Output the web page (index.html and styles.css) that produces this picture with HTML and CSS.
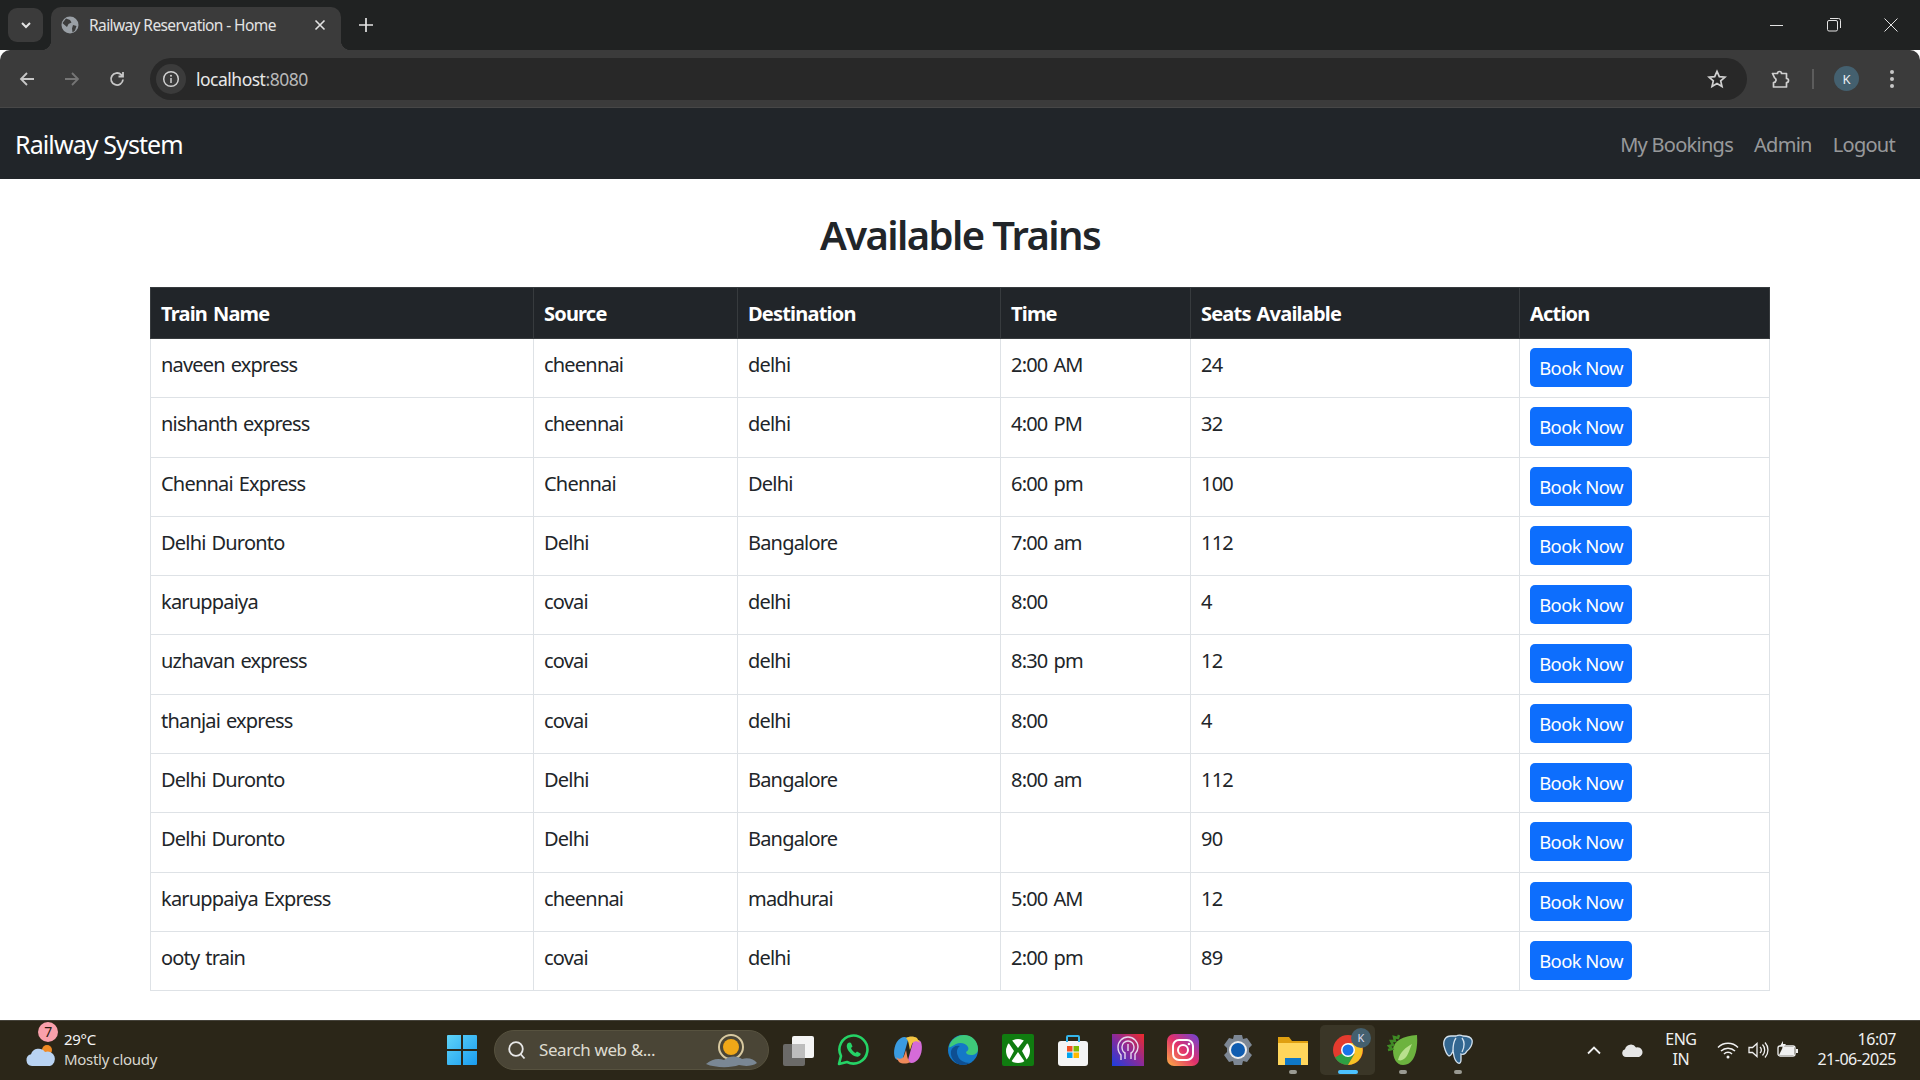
FILE: index.html
```html
<!DOCTYPE html>
<html lang="en">
  <head>
    <meta charset="UTF-8" />
    <title>Railway Reservation - Home</title>
    <link rel="stylesheet" href="styles.css">
  </head>
  <body>
    <div class="tabstrip">
      <div class="tab-search"><svg width="14" height="14" viewBox="0 0 14 14"><path d="M3 5l4 4 4-4" fill="none" stroke="#e3e3e3" stroke-width="2"/></svg></div>
      <div class="tab">
        <svg width="18" height="18" viewBox="0 0 18 18"><circle cx="9" cy="9" r="8.5" fill="#9aa0a6"/><path d="M5 2.5l4 1.5 1.5 2.5-3 1.5-1.5 3L3 8.5 1.5 7zM12 9l3.5 1-1.5 4.5-2.5 2-.5-4z" fill="#3c3c3c"/></svg>
        <span class="tab-title">Railway Reservation - Home</span>
        <svg class="tab-close" width="12" height="12" viewBox="0 0 12 12"><path d="M1.5 1.5l9 9M10.5 1.5l-9 9" stroke="#e3e3e3" stroke-width="1.6"/></svg>
      </div>
      <svg class="new-tab" width="14" height="14" viewBox="0 0 14 14"><path d="M7 0v14M0 7h14" stroke="#e3e3e3" stroke-width="1.7"/></svg>
      <div class="win-controls">
        <svg width="14" height="14" viewBox="0 0 14 14"><path d="M0 7.5h13" stroke="#e3e3e3"/></svg>
        <svg width="14" height="14" viewBox="0 0 14 14"><rect x=".5" y="2.5" width="10" height="10.5" rx="1.5" fill="none" stroke="#e3e3e3"/><path d="M3 .5h8.5a2 2 0 0 1 2 2V10" fill="none" stroke="#e3e3e3"/></svg>
        <svg width="14" height="14" viewBox="0 0 14 14"><path d="M.5.5l13 13M13.5.5l-13 13" stroke="#e3e3e3"/></svg>
      </div>
    </div>

    <div class="toolbar">
      <svg class="tool" width="18" height="18" viewBox="0 0 18 18"><path d="M16 9H3M9 3L3 9l6 6" fill="none" stroke="#c7c7c7" stroke-width="1.8"/></svg>
      <svg class="tool" width="18" height="18" viewBox="0 0 18 18"><path d="M2 9h13M9 3l6 6-6 6" fill="none" stroke="#757575" stroke-width="1.8"/></svg>
      <svg class="tool" width="18" height="18" viewBox="0 0 18 18"><path d="M15 9.5a6 6 0 1 1-1.8-4.8L15 6.500M15 2v4.500h-4.500" fill="none" stroke="#c7c7c7" stroke-width="1.8"/></svg>
      <div class="urlbar">
        <div class="site-info"><svg width="18" height="18" viewBox="0 0 18 18"><circle cx="9" cy="9" r="7.300" fill="none" stroke="#d0d0d0" stroke-width="1.500"/><path d="M9 8v5" stroke="#d0d0d0" stroke-width="1.500"/><circle cx="9" cy="5.700" r="1" fill="#d0d0d0"/></svg></div>
        <span class="url">localhost<span class="url-port">:8080</span></span>
        <svg class="star" width="20" height="20" viewBox="0 0 20 20"><path d="M10 2.300l2.300 5.300 5.700.5-4.300 3.800 1.300 5.600-5-3-5 3 1.300-5.600L2 8.100l5.700-.5z" fill="none" stroke="#d0d0d0" stroke-width="1.700"/></svg>
      </div>
      <svg class="ext" width="20" height="20" viewBox="0 0 20 20"><path d="M1.500 4.500h5a2 2 0 0 1 4 0h5v5a2 2 0 0 1 0 4V18H2.500v-4.500a2.500 2.500 0 0 0 1-4.800z" fill="none" stroke="#d0d0d0" stroke-width="1.700" stroke-linejoin="round"/></svg>
      <span class="divider"></span>
      <span class="avatar">K</span>
      <svg class="dots" width="6" height="20" viewBox="0 0 6 20"><circle cx="3" cy="3" r="2" fill="#c7c7c7"/><circle cx="3" cy="10" r="2" fill="#c7c7c7"/><circle cx="3" cy="17" r="2" fill="#c7c7c7"/></svg>
    </div>

    <nav class="navbar">
      <a class="brand">Railway System</a>
      <div class="nav-links">
        <a>My Bookings</a>
        <a>Admin</a>
        <a>Logout</a>
      </div>
    </nav>

    <main class="content">
      <h2 class="page-title">Available Trains</h2>
      <table class="trains">
        <colgroup>
          <col class="c-name"><col class="c-source"><col class="c-dest"><col class="c-time"><col class="c-seats"><col class="c-action">
        </colgroup>
        <thead>
          <tr><th>Train Name</th><th>Source</th><th>Destination</th><th>Time</th><th>Seats Available</th><th>Action</th></tr>
        </thead>
        <tbody>
          <tr><td>naveen express</td><td>cheennai</td><td>delhi</td><td>2:00 AM</td><td>24</td><td><button type="button" class="btn">Book Now</button></td></tr>
          <tr><td>nishanth express</td><td>cheennai</td><td>delhi</td><td>4:00 PM</td><td>32</td><td><button type="button" class="btn">Book Now</button></td></tr>
          <tr><td>Chennai Express</td><td>Chennai</td><td>Delhi</td><td>6:00 pm</td><td>100</td><td><button type="button" class="btn">Book Now</button></td></tr>
          <tr><td>Delhi Duronto</td><td>Delhi</td><td>Bangalore</td><td>7:00 am</td><td>112</td><td><button type="button" class="btn">Book Now</button></td></tr>
          <tr><td>karuppaiya</td><td>covai</td><td>delhi</td><td>8:00</td><td>4</td><td><button type="button" class="btn">Book Now</button></td></tr>
          <tr><td>uzhavan express</td><td>covai</td><td>delhi</td><td>8:30 pm</td><td>12</td><td><button type="button" class="btn">Book Now</button></td></tr>
          <tr><td>thanjai express</td><td>covai</td><td>delhi</td><td>8:00</td><td>4</td><td><button type="button" class="btn">Book Now</button></td></tr>
          <tr><td>Delhi Duronto</td><td>Delhi</td><td>Bangalore</td><td>8:00 am</td><td>112</td><td><button type="button" class="btn">Book Now</button></td></tr>
          <tr><td>Delhi Duronto</td><td>Delhi</td><td>Bangalore</td><td></td><td>90</td><td><button type="button" class="btn">Book Now</button></td></tr>
          <tr><td>karuppaiya Express</td><td>cheennai</td><td>madhurai</td><td>5:00 AM</td><td>12</td><td><button type="button" class="btn">Book Now</button></td></tr>
          <tr><td>ooty train</td><td>covai</td><td>delhi</td><td>2:00 pm</td><td>89</td><td><button type="button" class="btn">Book Now</button></td></tr>
        </tbody>
      </table>
    </main>

    <footer class="taskbar">
      <div class="weather">
        <span class="weather-icon">
          <svg width="32" height="24" viewBox="0 0 32 24"><circle cx="22" cy="6" r="5" fill="#f08a24"/><path d="M7 22a6 6 0 0 1-1-11.800A8 8 0 0 1 20 8a6.500 6.500 0 0 1 5 14z" fill="#b9d3f2"/></svg>
          <span class="badge">7</span>
        </span>
        <div class="weather-text"><div class="temp">29°C</div><div>Mostly cloudy</div></div>
      </div>
      <svg class="start" width="30" height="30" viewBox="0 0 30 30"><defs><linearGradient id="win" x1="0" y1="0" x2="1" y2="1"><stop offset="0" stop-color="#5fd4f8"/><stop offset="1" stop-color="#1a9cf0"/></linearGradient></defs><path d="M0 1a1 1 0 0 1 1-1h13v14H0zM16 0h13a1 1 0 0 1 1 1v13H16zM0 16h14v14H1a1 1 0 0 1-1-1zM16 16h14v13a1 1 0 0 1-1 1H16z" fill="url(#win)"/></svg>
      <div class="search">
        <svg width="20" height="20" viewBox="0 0 20 20"><circle cx="9" cy="9" r="6.800" fill="none" stroke="#e8e8e8" stroke-width="1.800"/><path d="M13.500 14l4 4.500" stroke="#e8e8e8" stroke-width="1.800"/></svg>
        <span class="search-text">Search web &amp;...</span>
        <svg class="search-art" width="56" height="40" viewBox="0 0 56 40"><circle cx="27" cy="17" r="12" fill="none" stroke="#d8c9a0" stroke-width="2"/><circle cx="27" cy="17" r="8" fill="#f0a818"/><path d="M2 34c6-5 12-6 18-4 6-5 14-4 18-1 6-2 12 0 15 4-6 4-14 3-18 2-8 3-24 3-33-1z" fill="#7a8794"/></svg>
      </div>
      <div class="apps">
        <div class="app"><svg width="32" height="32" viewBox="0 0 32 32"><rect x="10" y="2" width="22" height="22" rx="2" fill="#f4f4f4"/><rect x="1" y="10" width="22" height="22" rx="2" fill="#777" fill-opacity=".85"/><rect x="10" y="10" width="13" height="14" fill="#bdbdbd"/></svg></div>
        <div class="app"><svg width="32" height="32" viewBox="0 0 32 32"><path d="M2 30l2-8A14 14 0 1 1 10 28z" fill="none" stroke="#25d366" stroke-width="2.600" stroke-linejoin="round"/><path d="M11 9c-2 2-1.500 5 1 8.500s6.500 6 9.500 5c2-.7 2.500-2.500 2-3l-3.500-2-1.500 1.500c-1.500-.5-4-3-4.500-5l1.500-1.500-1.500-3.500c-.5-.7-2-.7-3 0z" fill="#25d366"/></svg></div>
        <div class="app"><svg width="32" height="32" viewBox="0 0 32 32"><path d="M9 4c3-2 7-1 7 2l-5 18c-1 3-6 3-8 0-2-5-1-16 6-20z" fill="#3a9be0"/><path d="M23 28c-3 2-7 1-7-2l5-18c1-3 6-3 8 0 2 5 1 16-6 20z" fill="#d56bd8"/><path d="M14 4c3-2 8-2 11 0l3 5c-3-3-7-2-8 1l-2 6c-1-4-1-9-4-12z" fill="#f4c542"/><path d="M18 28c-3 2-8 2-11 0l-3-5c3 3 7 2 8-1l2-6c1 4 1 9 4 12z" fill="#f08a5a"/></svg></div>
        <div class="app"><svg width="32" height="32" viewBox="0 0 32 32"><circle cx="16" cy="16" r="15" fill="#1478c8"/><path d="M2 13C4 4 12 1 17 1c8 0 14 6 14 14 0 4-3 6-7 6-3 0-5-1-5-3 2-1 3-3 2-5-2-4-8-5-12-3S3 14 2 13z" fill="#3ec97a"/><path d="M15 31C8 30 3 24 4 17c1-4 5-6 9-5-3 2-4 6-2 10 1 4 6 7 12 7-2 1-5 2-8 2z" fill="#0e4f92"/></svg></div>
        <div class="app"><svg width="32" height="32" viewBox="0 0 32 32"><rect width="32" height="32" rx="2" fill="#107c10"/><circle cx="16" cy="17" r="12" fill="#fff"/><path d="M16 14L9 5l-3 3 6 9-6 11h3zM16 14l7-9 3 3-6 9 6 11h-3l-7-10-7 10" fill="#107c10"/></svg></div>
        <div class="app"><svg width="32" height="32" viewBox="0 0 32 32"><rect x="1" y="7" width="30" height="25" rx="3" fill="#f4f4f4"/><path d="M10 8V3a1 1 0 0 1 1-1h10a1 1 0 0 1 1 1v5" fill="none" stroke="#35b5ea" stroke-width="2"/><rect x="10" y="12" width="5.500" height="5.500" fill="#f25022"/><rect x="16.500" y="12" width="5.500" height="5.500" fill="#7fba00"/><rect x="10" y="18.500" width="5.500" height="5.500" fill="#00a4ef"/><rect x="16.500" y="18.500" width="5.500" height="5.500" fill="#ffb900"/></svg></div>
        <div class="app"><svg width="32" height="32" viewBox="0 0 32 32"><defs><linearGradient id="pc" x1="0" y1="1" x2="1" y2="0"><stop offset="0" stop-color="#1a3fe0"/><stop offset=".5" stop-color="#8a2a9a"/><stop offset="1" stop-color="#ef2a2a"/></linearGradient></defs><rect width="32" height="32" fill="url(#pc)"/><path d="M9 26v-5c-2-2-3-4-3-8a10 10 0 0 1 20 0c0 3-1 5-3 7v6M13 25v-6c-2-1-3-3-3-6a6 6 0 0 1 12 0c0 3-1 5-3 6v6M16 10v7" fill="none" stroke="#e6d8ee" stroke-width="1.400"/></svg></div>
        <div class="app"><svg width="32" height="32" viewBox="0 0 32 32"><defs><linearGradient id="ig" x1="0" y1="1" x2="1" y2="0"><stop offset="0" stop-color="#fdb043"/><stop offset=".5" stop-color="#e1306c"/><stop offset="1" stop-color="#6a44d8"/></linearGradient></defs><rect width="32" height="32" rx="7" fill="url(#ig)"/><rect x="6" y="6" width="20" height="20" rx="6" fill="none" stroke="#fff" stroke-width="2"/><circle cx="16" cy="16" r="5" fill="none" stroke="#fff" stroke-width="2"/><circle cx="22" cy="10" r="1.300" fill="#fff"/></svg></div>
        <div class="app"><svg width="32" height="32" viewBox="0 0 32 32"><path d="M12 1h8l1 4 4-1 5 7-3 3v4l3 3-5 7-4-1-1 4h-8l-1-4-4 1-5-7 3-3v-4L2 11l5-7 4 1z" fill="#7d8794"/><circle cx="16" cy="16" r="9" fill="#eee"/><circle cx="16" cy="16" r="7" fill="#0f5cb0"/></svg></div>
        <div class="app"><svg width="32" height="32" viewBox="0 0 32 32"><path d="M1 3h11l3 4h16v24H1z" fill="#e0a010"/><rect x="1" y="9" width="30" height="22" fill="#ffd65c"/><rect x="8" y="24" width="16" height="7" fill="#0f78c8"/></svg></div>
        <div class="app app-active"><svg width="32" height="32" viewBox="0 0 32 32"><circle cx="16" cy="16" r="15" fill="#e33b2e"/><path d="M16 16L3 23.500A15 15 0 0 0 16 31l6.500-11z" fill="#2ea043"/><path d="M16 9h13a15 15 0 0 1-13 22l6.500-11z" fill="#f7c325"/><circle cx="16" cy="16" r="7" fill="#fff"/><circle cx="16" cy="16" r="5.500" fill="#1a73e8"/></svg><span class="app-avatar">K</span></div>
        <div class="app"><svg width="32" height="32" viewBox="0 0 32 32"><path d="M6 16C6 7 16 2 30 1c1 14-2 30-14 30C9 31 6 24 6 16z" fill="#6db33f"/><path d="M1 16l4-1-3-3 4-1-2-4 4 0-1-4 4 1 1-3" fill="none" stroke="#3f8a24" stroke-width="2.500"/><path d="M11 26c2-8 8-13 14-16-3 6-4 14-10 16-2 1-3 0-4 0z" fill="#b8e08e"/></svg></div>
        <div class="app"><svg width="32" height="32" viewBox="0 0 32 32"><path d="M9 2c-6 0-8 5-7 10 1 4 3 9 5 10 2 0 3-3 4-5 1 2 0 9 5 12 2 1 3-1 3-3v-6c3 1 5-1 6-3 3-2 6-7 5-11-1-3-5-4-9-4-2-1-5-1-7 0C12 2 10 2 9 2z" fill="#336791" stroke="#d4e2ee" stroke-width="1.300"/><path d="M14 4c-3 4-3 9-3 13M20 4c3 4 2 10 0 14" fill="none" stroke="#d4e2ee" stroke-width="1.300"/></svg></div>
      </div>
      <div class="tray">
        <svg width="16" height="10" viewBox="0 0 16 10"><path d="M2 8.500l6-6 6 6" fill="none" stroke="#f0f0f0" stroke-width="1.800"/></svg>
        <svg class="tray-cloud" width="22" height="14" viewBox="0 0 22 14"><path d="M5 14a4 4 0 0 1-1-7.800A6 6 0 0 1 15 4.500 4.800 4.800 0 0 1 18 14z" fill="#e6e6e6"/></svg>
        <div class="lang"><div>ENG</div><div>IN</div></div>
        <svg class="tray-wifi" width="22" height="18" viewBox="0 0 22 18"><path d="M1 6.500a14 14 0 0 1 20 0M4 10a10 10 0 0 1 14 0M7 13a5.500 5.500 0 0 1 8 0" fill="none" stroke="#f0f0f0" stroke-width="1.500"/><circle cx="11" cy="16" r="1.500" fill="#f0f0f0"/></svg>
        <svg class="tray-sound" width="22" height="18" viewBox="0 0 22 18"><path d="M1 6.500h3.500L9 2.500v13l-4.500-4H1z" fill="none" stroke="#f0f0f0" stroke-width="1.300"/><path d="M12 6a4 4 0 0 1 0 6M14.500 3.500a8 8 0 0 1 0 11M17 1.500a11 11 0 0 1 0 15" fill="none" stroke="#f0f0f0" stroke-width="1.300"/></svg>
        <svg class="tray-battery" width="22" height="18" viewBox="0 0 22 18"><rect x="1" y="5" width="17" height="10" rx="2" fill="none" stroke="#f0f0f0" stroke-width="1.300"/><path d="M2 14l4-8h11v8z" fill="#f0f0f0"/><rect x="19" y="8" width="2" height="4" fill="#f0f0f0"/><path d="M6 0L3 5h3l-1 3 4-5H6z" fill="#f0f0f0"/></svg>
        <div class="clock"><div>16:07</div><div>21-06-2025</div></div>
      </div>
    </footer>
  </body>
</html>
```

FILE: styles.css
```css
* {
  box-sizing: border-box;
}

html,
body {
  height: 100%;
}

body {
  margin: 0;
  display: flex;
  flex-direction: column;
  overflow: hidden;
  background: #fff;
  color: #212529;
  font-family: "Noto Sans", "Open Sans", sans-serif;
}

svg {
  display: block;
  flex: none;
}

/* browser tab strip */
.tabstrip {
  height: 50px;
  flex: none;
  display: flex;
  align-items: flex-end;
  background: #202222;
  padding-left: 8px;
  color: #e3e3e3;
}

.tab-search {
  width: 35px;
  height: 34px;
  margin-bottom: 8px;
  border-radius: 9px;
  background: #3b3b3b;
  display: flex;
  align-items: center;
  justify-content: center;
}

.tab {
  position: relative;
  width: 290px;
  height: 43px;
  margin-left: 8px;
  padding: 0 15px 8px 10px;
  display: flex;
  align-items: center;
  background: #3b3b3b;
  border-radius: 10px 10px 0 0;
}

.tab::before,
.tab::after {
  content: "";
  position: absolute;
  bottom: 0;
  width: 10px;
  height: 10px;
}

.tab::before {
  left: -10px;
  background: radial-gradient(circle at 0 0, transparent 10px, #3b3b3b 10.5px);
}

.tab::after {
  right: -10px;
  background: radial-gradient(circle at 100% 0, transparent 10px, #3b3b3b 10.5px);
}

.tab-title {
  margin-left: 10px;
  font-size: 15.5px;
  letter-spacing: -0.6px;
  white-space: nowrap;
}

.tab-close {
  margin-left: auto;
}

.new-tab {
  margin: 0 0 18px 18px;
}

.win-controls {
  margin-left: auto;
  width: 150px;
  height: 50px;
  padding-right: 22px;
  display: flex;
  align-items: center;
  justify-content: space-between;
}

/* browser toolbar */
.toolbar {
  height: 58px;
  flex: none;
  display: flex;
  align-items: center;
  background: #3b3b3b;
  border-radius: 10px 10px 0 0;
  border-bottom: 1px solid #474747;
  padding-left: 18px;
  position: relative;
}

.tool {
  margin-right: 27px;
}

.urlbar {
  width: 1597px;
  height: 42px;
  margin-left: -3px;
  padding: 0 20px 0 6px;
  display: flex;
  align-items: center;
  background: #282828;
  border-radius: 21px;
}

.site-info {
  width: 30px;
  height: 30px;
  border-radius: 50%;
  background: #3b3b3b;
  display: flex;
  align-items: center;
  justify-content: center;
}

.url {
  margin-left: 10px;
  font-size: 17.5px;
  letter-spacing: -0.5px;
  color: #e8e8e8;
}

.url-port {
  color: #b8b8b8;
}

.star {
  margin-left: auto;
}

.ext {
  margin-left: 24px;
}

.divider {
  width: 2px;
  height: 20px;
  margin-left: 21px;
  background: #5c5c5c;
}

.avatar {
  width: 25px;
  height: 25px;
  margin-left: 20px;
  border-radius: 50%;
  background: #44606f;
  color: #e8eef2;
  font-size: 13px;
  display: flex;
  align-items: center;
  justify-content: center;
}

.dots {
  margin-left: 30px;
}

/* site navbar */
.navbar {
  height: 71px;
  flex: none;
  padding: 0 25px 0 15px;
  display: flex;
  align-items: center;
  justify-content: space-between;
  background: #212529;
}

.brand {
  color: #fff;
  font-size: 25px;
  letter-spacing: -0.9px;
}

.nav-links {
  display: flex;
  gap: 21px;
  padding-top: 2px;
  font-size: 20px;
  letter-spacing: -0.72px;
  color: rgba(255, 255, 255, 0.55);
}

/* page content */
.content {
  flex: 1;
  min-height: 0;
  padding: 32px 150px 0;
}

.page-title {
  margin: 0 0 22px;
  height: 54px;
  line-height: 48px;
  text-align: center;
  font-size: 40px;
  font-weight: 600;
  letter-spacing: -1.6px;
}

.trains {
  width: 1620px;
  table-layout: fixed;
  border-collapse: collapse;
  font-size: 20px;
  letter-spacing: -0.8px;
  word-spacing: 1.5px;
}

.c-name { width: 383px; }
.c-source { width: 204px; }
.c-dest { width: 263px; }
.c-time { width: 190px; }
.c-seats { width: 329px; }
.c-action { width: 250px; }

.trains th {
  height: 51px;
  padding: 0 10px;
  text-align: left;
  font-weight: 700;
  color: #fff;
  background: #212529;
  border: 1px solid #373b3e;
}

.trains td {
  height: 59.3px;
  padding: 12px 10px 0;
  vertical-align: top;
  border: 1px solid #dee2e6;
}

.trains td:last-child {
  padding-top: 9px;
}

.btn {
  display: block;
  width: 102px;
  height: 39px;
  padding: 0;
  border: 0;
  border-radius: 5px;
  background: #0d6efd;
  color: #fff;
  font: inherit;
  font-size: 18.5px;
  letter-spacing: -0.6px;
  word-spacing: 0;
}

/* windows taskbar */
.taskbar {
  height: 60px;
  flex: none;
  display: flex;
  align-items: center;
  padding-bottom: 2px;
  background: #2b2618;
  border-top: 1px solid #45423a;
  color: #f0f0f0;
}

.weather {
  width: 447px;
  padding-left: 25px;
  display: flex;
  align-items: center;
  font-size: 15px;
  letter-spacing: -0.3px;
  line-height: 20px;
}

.weather-icon {
  position: relative;
  width: 32px;
  height: 24px;
  margin: 12px 7px 0 0;
}

.weather-text {
  margin-bottom: 2px;
  color: #d8d6cf;
}

.temp {
  color: #f4f4f4;
}

.badge {
  position: absolute;
  left: 13px;
  top: -22px;
  width: 20px;
  height: 20px;
  border-radius: 50%;
  background: #f9a0ab;
  color: #2a1a10;
  font-size: 14px;
  line-height: 20px;
  text-align: center;
}

.search {
  width: 275px;
  height: 40px;
  margin-left: 17px;
  padding: 0 8px 0 12px;
  display: flex;
  align-items: center;
  border-radius: 20px;
  background: #4a4536;
  border: 1px solid #57523f;
}

.search-text {
  margin-left: 12px;
  font-size: 17px;
  letter-spacing: -0.4px;
  color: #dedbd0;
  white-space: nowrap;
}

.search-art {
  margin-left: auto;
}

.apps {
  display: flex;
  margin-left: 1px;
}

.app {
  position: relative;
  width: 55px;
  height: 50px;
  display: flex;
  align-items: center;
  justify-content: center;
}

/* running-app dots under the icons */
.app:nth-child(10)::after,
.app:nth-child(12)::after,
.app:nth-child(13)::after {
  content: "";
  position: absolute;
  bottom: 1px;
  left: 24px;
  width: 8px;
  height: 4px;
  border-radius: 2px;
  background: #9a9a92;
}

.app-active {
  background: #3a3627;
  border-radius: 5px;
}

.app-active::after {
  content: "";
  position: absolute;
  bottom: 1px;
  left: 18px;
  width: 20px;
  height: 4px;
  border-radius: 2px;
  background: #4cc2ff;
}

.app-avatar {
  position: absolute;
  top: 3px;
  right: 4px;
  width: 20px;
  height: 20px;
  border-radius: 50%;
  background: #44606f;
  color: #dde;
  font-size: 11px;
  line-height: 20px;
  text-align: center;
}

.tray {
  margin-left: auto;
  padding-right: 24px;
  display: flex;
  align-items: center;
  font-size: 16px;
  line-height: 20px;
  letter-spacing: -0.5px;
}

.tray-cloud {
  margin-left: 19px;
}

.lang {
  margin-bottom: 2px;
  margin-left: 22px;
  text-align: center;
}

.tray-wifi {
  margin-left: 21px;
}

.tray-sound {
  margin-left: 9px;
}

.tray-battery {
  margin-left: 7px;
}

.clock {
  margin-bottom: 2px;
  margin-left: 18px;
  text-align: right;
}
```
